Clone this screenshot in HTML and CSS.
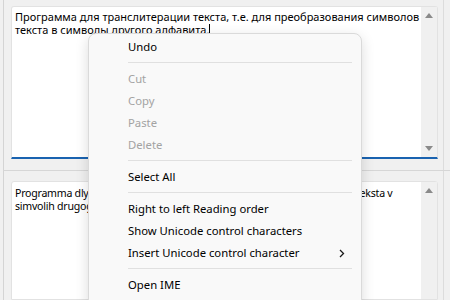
FILE: index.html
```html
<!DOCTYPE html>
<html lang="en">
<head>
    <meta charset="UTF-8">
    <title>Transliteration</title>
    <link rel="stylesheet" href="styles.css">
</head>
<body>
    <div class="window">
        <div class="editor editor-top">
            <div class="text">
                <div class="line">Программа для транслитерации текста, т.е. для преобразования символов</div>
                <div class="line">текста в символы другого алфавита.<span class="caret"></span></div>
            </div>
            <div class="scrollbar">
                <span class="arrow up"></span>
                <span class="arrow down"></span>
            </div>
        </div>

        <div class="divider"></div>

        <div class="editor editor-bottom">
            <div class="text latin">
                <div class="line">Programma dlya transliteracii teksta, t.e. dlya preobrazovaniya simvolov teksta v</div>
                <div class="line">simvolih drugogo alfavita.</div>
            </div>
            <div class="scrollbar">
                <span class="arrow up"></span>
            </div>
        </div>
    </div>

    <!-- context menu over the editors -->
    <div class="menu">
        <div class="item">Undo</div>
        <div class="sep"></div>
        <div class="item disabled">Cut</div>
        <div class="item disabled">Copy</div>
        <div class="item disabled">Paste</div>
        <div class="item disabled">Delete</div>
        <div class="sep"></div>
        <div class="item">Select All</div>
        <div class="sep"></div>
        <div class="item">Right to left Reading order</div>
        <div class="item">Show Unicode control characters</div>
        <div class="item submenu">
            <span>Insert Unicode control character</span>
            <svg class="chevron" width="6" height="9" viewBox="0 0 6 9">
                <path d="M1 1 L4.5 4.5 L1 8" fill="none" stroke="#1a1a1a" stroke-width="1.3"/>
            </svg>
        </div>
        <div class="sep"></div>
        <div class="item">Open IME</div>
    </div>
</body>
</html>
```

FILE: styles.css
```css
html, body {
    margin: 0;
    height: 300px;
    overflow: hidden;
}
body {
    background: #f0f0f0;
    font-family: "Noto Sans", "Open Sans", sans-serif;
    font-size: 11.3px;
    color: #000;
    position: relative;
}
.window {
    margin: 0 6px 0 3px;
    height: 300px;
    border-left: 1px solid #d4d4d4;
    border-right: 1px solid #dcdcdc;
    padding: 6px 5px 0 7px;
    box-sizing: border-box;
    display: flex;
    flex-direction: column;
}
.editor {
    display: grid;
    grid-template-columns: 1fr 16px;
    background: #fff;
    border: 1px solid #e2e2e2;
    border-radius: 3px 3px 0 0;
}
.editor-top {
    height: 153px;
    box-sizing: border-box;
    border-bottom: 2px solid #1a63b0;
}
.editor-bottom {
    flex: 1;
}
.text {
    padding: 3px 3px;
    font-size: 11px;
    line-height: 13px;
    white-space: nowrap;
    overflow: hidden;
}
.text.latin {
    padding-top: 5px;
    font-size: 10.6px;
    letter-spacing: -0.25px;
}
.caret {
    display: inline-block;
    width: 1px;
    height: 13px;
    background: #000;
    vertical-align: -3px;
}
.scrollbar {
    background: #f0f0f0;
    display: flex;
    flex-direction: column;
    justify-content: space-between;
    align-items: center;
    padding: 6px 0;
}
.arrow {
    width: 0;
    height: 0;
    border-left: 4px solid transparent;
    border-right: 4px solid transparent;
}
.arrow.up {
    border-bottom: 5px solid #8a8a8a;
}
.arrow.down {
    border-top: 5px solid #8a8a8a;
}
.divider {
    height: 1px;
    background: #d6d6d6;
    margin: 11px -12px 10px -8px;
}
.menu {
    position: absolute;
    left: 88px;
    top: 33px;
    bottom: -12px;
    width: 274px;
    box-sizing: border-box;
    padding: 2px 0;
    background: #f9f9f9;
    border: 1px solid #dadada;
    border-radius: 8px;
    box-shadow: 0 4px 14px rgba(0, 0, 0, 0.14);
}
.item {
    height: 22px;
    line-height: 22px;
    padding-left: 39px;
    padding-right: 16px;
    white-space: nowrap;
}
.item.disabled {
    color: #a3a3a3;
}
.submenu {
    display: flex;
    justify-content: space-between;
    align-items: center;
}
.sep {
    height: 1px;
    background: #e0e0e0;
    margin: 4px 9px 5px 39px;
}
```
